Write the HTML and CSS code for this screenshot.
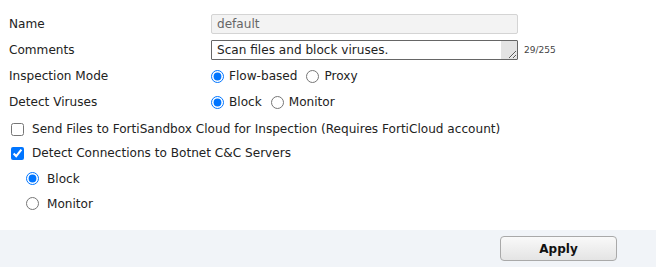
FILE: index.html
```html
<!DOCTYPE html>
<html>
<head>
<meta charset="utf-8">
<link rel="stylesheet" href="styles.css">
</head>
<body>
<div class="form">
  <div class="row">
    <label class="lbl">Name</label>
    <input class="txt readonly" type="text" value="default" readonly>
  </div>
  <div class="row">
    <label class="lbl">Comments</label>
    <div class="comment-wrap">
      <textarea class="area" rows="1">Scan files and block viruses.</textarea>
      <span class="count">29/255</span>
    </div>
  </div>
  <div class="row">
    <label class="lbl">Inspection Mode</label>
    <div class="opts">
      <label class="opt"><input type="radio" name="mode" checked> Flow-based</label>
      <label class="opt"><input type="radio" name="mode"> Proxy</label>
    </div>
  </div>
  <div class="row">
    <label class="lbl">Detect Viruses</label>
    <div class="opts">
      <label class="opt"><input type="radio" name="vir" checked> Block</label>
      <label class="opt"><input type="radio" name="vir"> Monitor</label>
    </div>
  </div>
  <div class="checks">
    <label class="check"><input type="checkbox"> Send Files to FortiSandbox Cloud for Inspection (Requires FortiCloud account)</label>
    <label class="check"><input type="checkbox" checked> Detect Connections to Botnet C&amp;C Servers</label>
  </div>
  <div class="sub">
    <label class="opt"><input type="radio" name="bot" checked> Block</label>
    <label class="opt"><input type="radio" name="bot"> Monitor</label>
  </div>
</div>
<div class="footer">
  <button class="apply">Apply</button>
</div>
</body>
</html>
```
FILE: styles.css
```css
html, body {
  margin: 0;
  padding: 0;
  background: #fff;
}
body {
  font-family: "DejaVu Sans", Verdana, sans-serif;
  font-size: 12.1px;
  color: #222;
}
.form {
  padding: 14px 0 0 9px;
  height: 216px;
  box-sizing: border-box;
}
.row {
  display: grid;
  grid-template-columns: 202px 1fr;
  align-items: center;
  margin-bottom: 6px;
}
.lbl {
  color: #222;
}
.txt {
  width: 307px;
  height: 20px;
  box-sizing: border-box;
  margin: 0;
  padding: 0 5px;
  font: inherit;
  color: #666;
  background: #f3f3f3;
  border: 1px solid #d4d4d4;
  border-radius: 2px;
  outline: none;
}
.comment-wrap {
  display: flex;
  align-items: center;
  gap: 6px;
}
.area {
  width: 307px;
  height: 20px;
  box-sizing: border-box;
  margin: 0;
  padding: 1px 5px;
  font: inherit;
  color: #222;
  border: 1px solid #666;
  border-radius: 1px;
  resize: vertical;
  overflow: hidden;
  line-height: 16px;
  background: linear-gradient(to left, #e3e3e3 16px, #fff 16px);
}
.count {
  font-size: 9px;
  color: #444;
}
.opts {
  display: flex;
  gap: 9px;
  height: 20px;
  align-items: center;
}
.opt {
  display: flex;
  align-items: center;
  gap: 5px;
}
.opt input, .check input {
  margin: 0;
  width: 13px;
  height: 13px;
}
.checks {
  margin-top: -1px;
}
.check {
  display: flex;
  align-items: center;
  gap: 8px;
  height: 24px;
  padding-left: 2px;
}
.sub {
  display: flex;
  flex-direction: column;
  padding-left: 17px;
  margin-top: 1px;
}
.sub .opt {
  height: 25px;
  gap: 8px;
}
.footer {
  background: #f1f4f8;
  height: 37px;
  margin-top: 14px;
  display: flex;
  align-items: center;
  padding-left: 500px;
}
.apply {
  width: 117px;
  height: 25px;
  margin: 0;
  font: bold 12px "DejaVu Sans", Verdana, sans-serif;
  color: #111;
  background: linear-gradient(#f9f9f9, #e4e4e4);
  border: 1px solid #a9a9a9;
  border-radius: 4px;
}
```
